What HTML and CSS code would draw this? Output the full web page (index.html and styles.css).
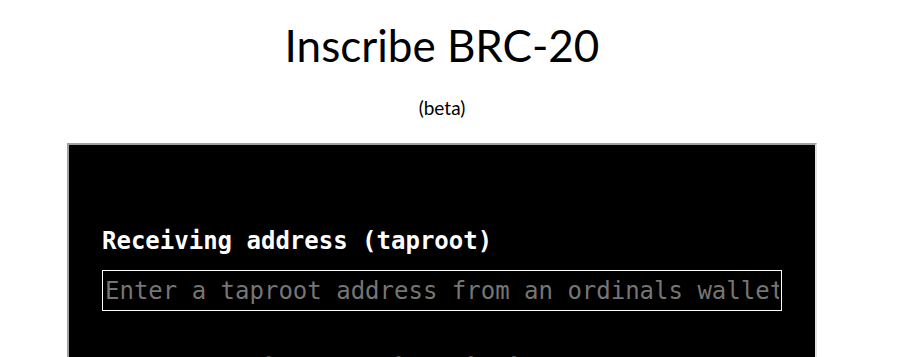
FILE: index.html
```html
<!DOCTYPE html>
<html lang="en">
<head>
<meta charset="utf-8">
<title>Inscribe BRC-20</title>
<link rel="stylesheet" href="styles.css">
</head>
<body>
<div class="page">
  <h1 class="title">Inscribe BRC-20</h1>
  <p class="subtitle">(beta)</p>
  <div class="panel">
    <label class="field-label" for="addr">Receiving address (taproot)</label>
    <input class="field-input" id="addr" type="text" placeholder="Enter a taproot address from an ordinals wallet">
    <label class="field-label next" for="mints">Number of mints per inscription (1-10)</label>
  </div>
</div>
</body>
</html>
```
FILE: styles.css
```css
html, body {
  margin: 0;
  padding: 0;
  background: #fff;
}
.page {
  padding: 0 33px 0 8px;
  font-family: Lato, "Open Sans", sans-serif;
  color: #000;
}
.title {
  margin: 19px 0 0;
  font-size: 44px;
  font-weight: 400;
  line-height: 53px;
  text-align: center;
}
.subtitle {
  margin: 24px 0 0;
  font-size: 19px;
  line-height: 23px;
  text-align: center;
}
.panel {
  width: 750px;
  box-sizing: border-box;
  margin: 24px auto 0;
  background: #000;
  border-style: solid;
  border-width: 2px;
  border-color: #a0a0a0 #e3e3e3 #e3e3e3 #a0a0a0;
  padding: 82px 33px 40px;
  display: flex;
  flex-direction: column;
  align-items: flex-start;
  font-family: "DejaVu Sans Mono", "Liberation Mono", monospace;
}
.field-label {
  color: #fff;
  font-weight: 700;
  font-size: 24px;
  line-height: 28px;
}
.field-label.next {
  margin-top: 44px;
}
.field-input {
  margin-top: 15px;
  width: 680px;
  height: 41px;
  box-sizing: border-box;
  padding: 0 2px;
  background: #000;
  color: #fff;
  border: 1px solid #fff;
  outline: none;
  font-family: "DejaVu Sans Mono", "Liberation Mono", monospace;
  font-size: 24px;
}
.field-input::placeholder {
  color: #757575;
}
```
